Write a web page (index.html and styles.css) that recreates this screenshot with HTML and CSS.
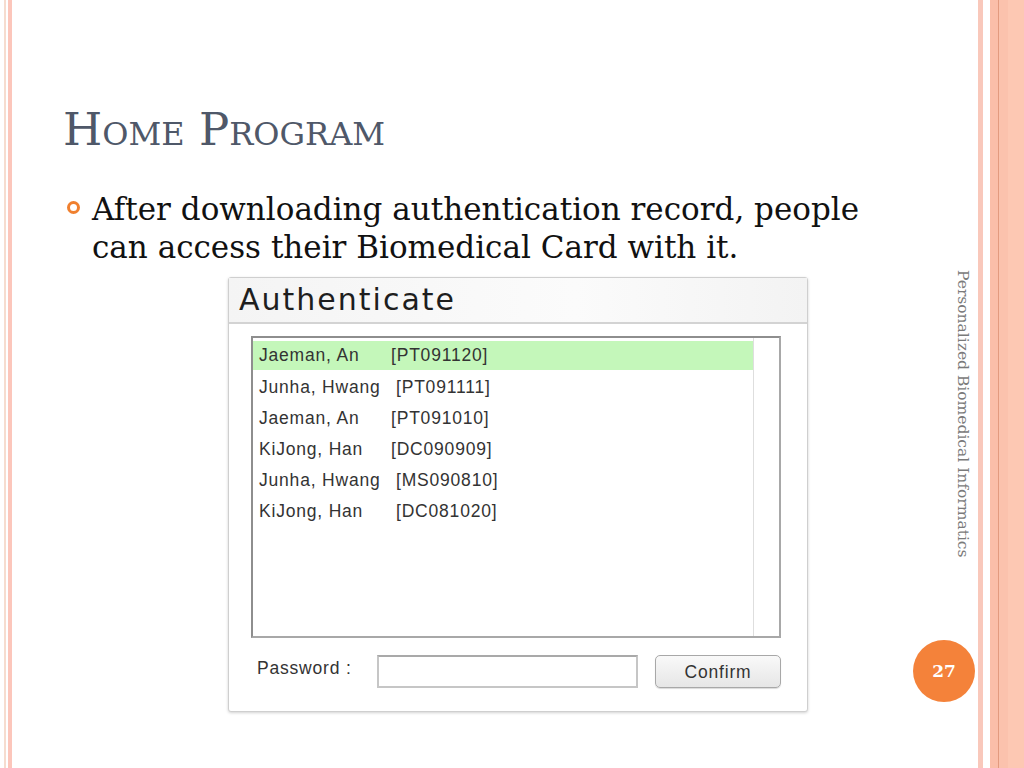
FILE: index.html
```html
<!DOCTYPE html>
<html>
<head>
  <meta charset="utf-8">
  <title>Home Program</title>
  <link rel="stylesheet" href="styles.css">
</head>
<body>
  <div class="slide">
    <h1 class="title">Home Program</h1>
    <ul class="points">
      <li>After downloading authentication record, people can access their Biomedical Card with it.</li>
    </ul>
    <div class="auth">
      <div class="auth_head">Authenticate</div>
      <div class="auth_body">
        <div class="listbox">
          <div class="rows">
            <div class="row selected"><span class="name">Jaeman, An</span><span class="code">[PT091120]</span></div>
            <div class="row"><span class="name">Junha, Hwang</span><span class="code shift">[PT091111]</span></div>
            <div class="row"><span class="name">Jaeman, An</span><span class="code">[PT091010]</span></div>
            <div class="row"><span class="name">KiJong, Han</span><span class="code">[DC090909]</span></div>
            <div class="row"><span class="name">Junha, Hwang</span><span class="code shift">[MS090810]</span></div>
            <div class="row"><span class="name">KiJong, Han</span><span class="code shift">[DC081020]</span></div>
          </div>
          <div class="scrollbar"></div>
        </div>
        <div class="login">
          <span class="label">Password :</span>
          <span class="pass"></span>
          <span class="confirm">Confirm</span>
        </div>
      </div>
    </div>
  </div>
  <div class="side">
    <div class="footer_text">Personalized Biomedical Informatics</div>
    <div class="page_num">27</div>
  </div>
</body>
</html>
```

FILE: styles.css
```css
*, *:before, *:after {
  box-sizing: border-box;
}
html, body {
  height: 100%;
}
body {
  margin: 0;
  padding: 0;
  display: flex;
  overflow: hidden;
  font-family: "DejaVu Serif", serif;
  background:
    linear-gradient(to right,
      #fff 0, #fff 4px,
      #f6dccf 4px, #f6dccf 6px,
      #fff 6px, #fff 8px,
      #fcc6bb 8px, #fcc6bb 12px,
      #fff 12px) left top / 14px 100% no-repeat,
    linear-gradient(to right,
      #fff 0, #fff 978px,
      #f9c8bb 978px, #f9c8bb 983px,
      #fff 983px, #fff 990px,
      #fbbea9 990px, #fbbea9 998px,
      #e39a7f 998px, #e39a7f 999px,
      #fbc2ad 999px, #fbc2ad 1008px,
      #fdc8b3 1008px);
}

.slide {
  flex: 1;
  padding: 104px 0 0 63px;
}
.title {
  margin: 0;
  font-weight: normal;
  font-size: 45px;
  line-height: 52px;
  font-variant: small-caps;
  color: #4f5869;
}
.points {
  list-style: none;
  margin: 34px 0 0 0;
  padding: 0;
}
.points li {
  display: flex;
  font-size: 31px;
  line-height: 38px;
  color: #111;
  padding-right: 40px;
}
.points li:before {
  content: "";
  flex: none;
  width: 13px;
  height: 13px;
  margin: 11px 12px 0 4px;
  border: 3px solid #f0802f;
  border-radius: 50%;
}

.auth {
  width: 580px;
  height: 435px;
  margin: 11px 0 0 165px;
  border: 1px solid #cfcfcf;
  border-radius: 3px;
  background: #fff;
  box-shadow: 0 1px 3px rgba(0, 0, 0, 0.18);
  font-family: "Liberation Sans", Arial, sans-serif;
}
.auth_head {
  height: 46px;
  padding: 4px 0 0 10px;
  background: linear-gradient(to right, #f4f4f4, #fbfbfb 60%, #f3f3f3);
  border-bottom: 2px solid #d3d3d3;
  font-family: "DejaVu Sans", sans-serif;
  font-size: 30px;
  letter-spacing: 2px;
  color: #1e1e1e;
}
.auth_body {
  padding: 12px 26px 0 22px;
}
.listbox {
  display: flex;
  height: 302px;
  border: 2px solid #a8a8a8;
  border-top-color: #8e8e8e;
  border-left-color: #8e8e8e;
}
.rows {
  flex: 1;
  padding-top: 3px;
}
.row {
  display: flex;
  height: 31px;
  padding: 5px 0 0 6px;
  font-size: 17.5px;
  letter-spacing: 0.8px;
  color: #333;
}
.row.selected {
  height: 29px;
  margin-bottom: 2px;
  padding-top: 4px;
  background: #c4f7ba;
}
.name {
  width: 132px;
}
.code.shift {
  padding-left: 5px;
}
.scrollbar {
  width: 26px;
  border-left: 1px solid #dedede;
  background: #fff;
}
.login {
  display: flex;
  align-items: center;
  margin-top: 17px;
  height: 33px;
  font-size: 17.5px;
  color: #333;
  letter-spacing: 0.8px;
}
.label {
  width: 126px;
  padding-left: 6px;
  margin-top: -6px;
}
.pass {
  width: 261px;
  height: 33px;
  border: 2px solid #c6c6c6;
  border-top-color: #a9a9a9;
  background: #fff;
}
.confirm {
  width: 126px;
  height: 33px;
  margin-left: 17px;
  padding-top: 6px;
  text-align: center;
  border: 1px solid #a8a8a8;
  border-radius: 5px;
  background: linear-gradient(#f9f9f9, #e6e6e6);
  box-shadow: 0 1px 1px rgba(0, 0, 0, 0.15);
}

.side {
  width: 62px;
  margin-right: 49px;
  display: flex;
  flex-direction: column;
}
.footer_text {
  align-self: flex-end;
  margin: 270px 3px 0 0;
  height: 290px;
  writing-mode: vertical-rl;
  font-size: 15.5px;
  color: #7a7a7a;
  white-space: nowrap;
}
.page_num {
  width: 62px;
  height: 62px;
  margin-top: 80px;
  border-radius: 50%;
  background: #f4823a;
  color: #fff;
  font-weight: bold;
  font-size: 17px;
  line-height: 62px;
  text-align: center;
}
```
